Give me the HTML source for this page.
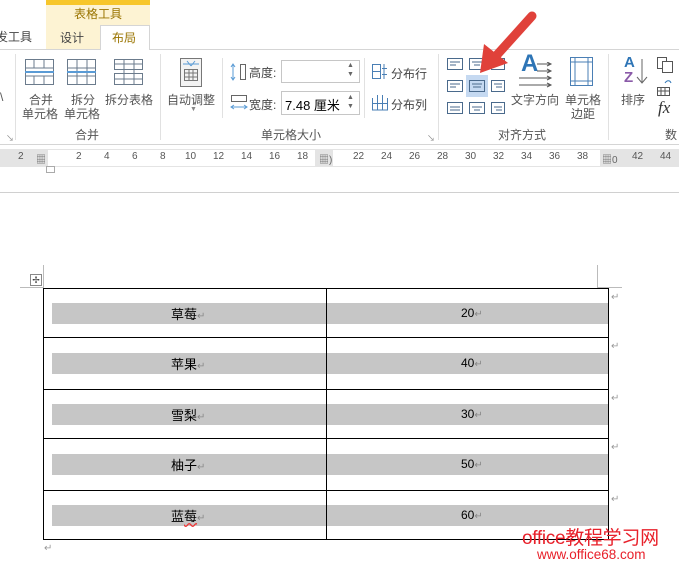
<!DOCTYPE html>
<html><head><meta charset="utf-8">
<style>
*{margin:0;padding:0;box-sizing:border-box}
body{width:679px;height:572px;overflow:hidden;background:#fff;font-family:"Liberation Sans","Noto Sans CJK SC",sans-serif;font-size:12px;color:#444;position:relative}
.a{position:absolute;white-space:nowrap}
.lbl{color:#555;font-size:12px}
.sep{position:absolute;width:1px;background:#e1e1e1}
.band{position:absolute;left:52px;width:556px;height:21px;background:#c6c6c6}
.hl{position:absolute;left:43px;width:566px;height:1px;background:#000}
.cell{position:absolute;font-size:13px;color:#000}
.ret{color:#888;font-size:10px}
.rt{position:absolute;color:#999;font-size:10px}
</style></head><body>
<div class="a" style="left:46px;top:0;width:104px;height:5px;background:#f7c62b"></div>
<div class="a" style="left:46px;top:5px;width:104px;height:44px;background:#fdf3d3"></div>
<div class="a" style="left:74px;top:5px;color:#9a7400;font-size:12px">表格工具</div>
<div class="a" style="left:-4px;top:28px;color:#444;font-size:12px">发工具</div>
<div class="a" style="left:60px;top:29px;color:#444;font-size:12px">设计</div>
<div class="a" style="left:100px;top:25px;width:50px;height:25px;background:#fff;border:1px solid #d5d5d5;border-bottom:none"></div>
<div class="a" style="left:112px;top:29px;color:#9a7400;font-size:12px">布局</div>
<div class="a" style="left:0;top:49px;width:100px;height:1px;background:#d5d5d5"></div>
<div class="a" style="left:150px;top:49px;width:529px;height:1px;background:#d5d5d5"></div>
<div class="sep" style="left:15px;top:54px;height:86px"></div>
<div class="sep" style="left:160px;top:54px;height:86px"></div>
<div class="sep" style="left:222px;top:58px;height:60px"></div>
<div class="sep" style="left:364px;top:58px;height:60px"></div>
<div class="sep" style="left:438px;top:54px;height:86px"></div>
<div class="sep" style="left:608px;top:54px;height:86px"></div>
<div class="a lbl" style="left:0;top:90px">\</div>
<svg class="a" style="left:24px;top:58px" width="120" height="28">
 <g fill="none" stroke="#6b7b8c" stroke-width="1">
  <rect x="1.5" y="1.5" width="28" height="25"/><line x1="1" y1="10" x2="30" y2="10"/><line x1="1" y1="18" x2="30" y2="18"/><line x1="10" y1="1" x2="10" y2="10"/><line x1="20" y1="1" x2="20" y2="10"/><line x1="10" y1="18" x2="20" y2="18"/><line x1="10" y1="18" x2="10" y2="27"/><line x1="20" y1="18" x2="20" y2="27"/>
  <rect x="43.5" y="1.5" width="28" height="25"/><line x1="43" y1="10" x2="72" y2="10"/><line x1="43" y1="18" x2="72" y2="18"/><line x1="53" y1="1" x2="53" y2="27"/><line x1="63" y1="1" x2="63" y2="27"/>
  <rect x="90.5" y="1.5" width="28" height="10"/><rect x="90.5" y="15.5" width="28" height="11"/><line x1="100" y1="1" x2="100" y2="27"/><line x1="110" y1="1" x2="110" y2="27"/><line x1="90" y1="6" x2="119" y2="6"/><line x1="90" y1="21" x2="119" y2="21"/>
 </g>
 <line x1="1" y1="14" x2="30" y2="14" stroke="#5a9bd5" stroke-width="2"/>
 <line x1="43" y1="14" x2="72" y2="14" stroke="#5a9bd5" stroke-width="2"/>
</svg>
<div class="a lbl" style="left:29px;top:91px">合并</div>
<div class="a lbl" style="left:22px;top:105px">单元格</div>
<div class="a lbl" style="left:71px;top:91px">拆分</div>
<div class="a lbl" style="left:64px;top:105px">单元格</div>
<div class="a lbl" style="left:105px;top:91px">拆分表格</div>
<div class="a lbl" style="left:75px;top:126px">合并</div>
<div class="a" style="left:6px;top:133px;font-size:8px;color:#888">↘</div>
<svg class="a" style="left:179px;top:58px" width="24" height="30">
 <rect x="1.5" y="0.5" width="21" height="28" fill="#f3f3f3" stroke="#777"/>
 <g stroke="#777" fill="none"><rect x="5.5" y="11.5" width="13" height="11"/><line x1="5" y1="15" x2="19" y2="15"/><line x1="5" y1="19" x2="19" y2="19"/><line x1="10" y1="11" x2="10" y2="23"/><line x1="14" y1="11" x2="14" y2="23"/></g>
 <path d="M4 6h16M8 3l4 5M16 3l-4 5" stroke="#5a9bd5" fill="none"/>
</svg>
<div class="a lbl" style="left:167px;top:91px">自动调整</div>
<div class="a" style="left:190px;top:106px;font-size:7px;color:#888">▼</div>
<svg class="a" style="left:229px;top:62px" width="20" height="20"><path d="M4 2v16M2 5l2-3 2 3M2 15l2 3 2-3" stroke="#5a9bd5" fill="none"/><rect x="11.5" y="2.5" width="5" height="15" fill="none" stroke="#666"/></svg>
<div class="a lbl" style="left:249px;top:64px;color:#444">高度:</div>
<div class="a" style="left:281px;top:60px;width:79px;height:23px;border:1px solid #c6c6c6"></div>
<div class="a" style="left:347px;top:61px;font-size:7px;color:#666;line-height:9px">▲<br>▼</div>
<svg class="a" style="left:229px;top:93px" width="20" height="20"><rect x="2.5" y="2.5" width="15" height="6" fill="none" stroke="#666"/><path d="M2 14h16M5 12l-3 2 3 2M15 12l3 2-3 2" stroke="#5a9bd5" fill="none"/></svg>
<div class="a lbl" style="left:249px;top:96px;color:#444">宽度:</div>
<div class="a" style="left:281px;top:91px;width:79px;height:24px;border:1px solid #c6c6c6"></div>
<div class="a" style="left:285px;top:95px;font-size:13px;color:#000">7.48 厘米</div>
<div class="a" style="left:347px;top:93px;font-size:7px;color:#666;line-height:9px">▲<br>▼</div>
<svg class="a" style="left:372px;top:64px" width="16" height="16"><g stroke="#4a7fb5" fill="none"><rect x="0.5" y="0.5" width="8" height="14"/><line x1="0" y1="7.5" x2="9" y2="7.5"/><line x1="12" y1="0" x2="12" y2="15"/><line x1="10" y1="4.5" x2="15" y2="4.5"/><line x1="10" y1="10.5" x2="15" y2="10.5"/></g></svg>
<div class="a lbl" style="left:391px;top:65px;color:#444">分布行</div>
<svg class="a" style="left:372px;top:95px" width="16" height="16"><g stroke="#4a7fb5" fill="none"><path d="M0.5 3v12h15V3M5.5 0v15M10.5 0v15M0 8.5h16"/></g></svg>
<div class="a lbl" style="left:391px;top:96px;color:#444">分布列</div>
<div class="a lbl" style="left:261px;top:126px">单元格大小</div>
<div class="a" style="left:427px;top:133px;font-size:8px;color:#888">↘</div>
<svg class="a" style="left:444px;top:55px" width="62" height="63">
 <rect x="22" y="20" width="22" height="22" fill="#c5d9f1"/>
 <g fill="none" stroke="#4a6a8c">
  <rect x="3.5" y="3.5" width="15" height="11"/><rect x="25.5" y="3.5" width="15" height="11"/><rect x="47.5" y="3.5" width="13" height="11"/>
  <rect x="3.5" y="25.5" width="15" height="11"/><rect x="25.5" y="25.5" width="15" height="11"/><rect x="47.5" y="25.5" width="13" height="11"/>
  <rect x="3.5" y="47.5" width="15" height="11"/><rect x="25.5" y="47.5" width="15" height="11"/><rect x="47.5" y="47.5" width="13" height="11"/>
  <path d="M6 7h10M6 10h6M28 7h10M30 10h6M6 29h10M6 32h6M28 29h10M29 32h8M50 29h8M52 32h6M6 52h10M6 55h10M28 52h10M30 55h6M50 52h8M52 55h6"/>
 </g>
</svg>
<div class="a" style="left:521px;top:52px;font-size:24px;color:#2e75b6;font-weight:bold;line-height:24px">A</div>
<svg class="a" style="left:517px;top:62px" width="38" height="30"><g stroke="#555" fill="none"><path d="M20 2h14M20 9h14M2 16h32M2 23h32M30 0l4 2-4 2M30 7l4 2-4 2M30 14l4 2-4 2M30 21l4 2-4 2"/></g></svg>
<div class="a lbl" style="left:511px;top:91px">文字方向</div>
<svg class="a" style="left:570px;top:57px" width="24" height="30"><g fill="none" stroke="#4a7fb5"><rect x="0.5" y="0.5" width="22" height="28"/><line x1="5" y1="0" x2="5" y2="29"/><line x1="18" y1="0" x2="18" y2="29"/><line x1="0" y1="5" x2="23" y2="5"/><line x1="0" y1="24" x2="23" y2="24"/></g></svg>
<div class="a lbl" style="left:565px;top:91px">单元格</div>
<div class="a lbl" style="left:571px;top:105px">边距</div>
<div class="a lbl" style="left:498px;top:126px">对齐方式</div>
<div class="a" style="left:624px;top:55px;font-size:15px;font-weight:bold;color:#2e75b6;line-height:15px">A</div>
<div class="a" style="left:624px;top:70px;font-size:15px;font-weight:bold;color:#8a5aa8;line-height:15px">Z</div>
<svg class="a" style="left:636px;top:58px" width="12" height="28"><path d="M6 1v24M1 19l5 6 5-6" stroke="#666" fill="none"/></svg>
<div class="a lbl" style="left:621px;top:91px">排序</div>
<svg class="a" style="left:657px;top:57px" width="22" height="60"><g fill="none" stroke="#555"><rect x="0.5" y="0.5" width="9" height="11"/><rect x="5.5" y="4.5" width="10" height="11" fill="#fff"/><rect x="0.5" y="30.5" width="12" height="8"/><path d="M0 34h12M4 30v9M8 30v9"/></g><path d="M8 26c2-3 5-3 6 0" stroke="#2e75b6" fill="none"/></svg>
<div class="a" style="left:658px;top:98px;font-size:17px;font-style:italic;font-family:'Liberation Serif',serif;color:#333">fx</div>
<div class="a lbl" style="left:665px;top:126px">数</div>
<svg class="a" style="left:470px;top:8px" width="80" height="72"><path d="M62 8L26 48" stroke="#e0413a" stroke-width="9" stroke-linecap="round"/><path d="M10 65L14 36L38 55Z" fill="#e0413a"/></svg>
<div class="a" style="left:0;top:144px;width:679px;height:1px;background:#d5d5d5"></div>
<div class="a" style="left:0;top:149px;width:679px;height:18px;background:#e4e4e4"></div>
<div class="a" style="left:48px;top:150px;width:267px;height:16px;background:#fff"></div>
<div class="a" style="left:333px;top:150px;width:267px;height:16px;background:#fff"></div>
<div class="a" style="left:0;top:151px;width:679px;font-size:10px;color:#555">
<span class="a" style="left:18px">2</span><span class="a" style="left:36px;color:#666">▦</span><span class="a" style="left:76px">2</span><span class="a" style="left:104px">4</span><span class="a" style="left:132px">6</span><span class="a" style="left:160px">8</span><span class="a" style="left:185px">10</span><span class="a" style="left:213px">12</span><span class="a" style="left:241px">14</span><span class="a" style="left:269px">16</span><span class="a" style="left:297px">18</span><span class="a" style="left:319px;color:#666">▦)</span><span class="a" style="left:353px">22</span><span class="a" style="left:381px">24</span><span class="a" style="left:409px">26</span><span class="a" style="left:437px">28</span><span class="a" style="left:465px">30</span><span class="a" style="left:493px">32</span><span class="a" style="left:521px">34</span><span class="a" style="left:549px">36</span><span class="a" style="left:577px">38</span><span class="a" style="left:602px;color:#666">▦0</span><span class="a" style="left:632px">42</span><span class="a" style="left:660px">44</span>
</div>
<div class="a" style="left:46px;top:166px;width:9px;height:7px;border:1px solid #aaa;background:#fff"></div>
<div class="a" style="left:0;top:192px;width:679px;height:1px;background:#d0d0d0"></div>
<div class="a" style="left:43px;top:265px;width:1px;height:23px;background:#bbb"></div>
<div class="a" style="left:20px;top:287px;width:23px;height:1px;background:#bbb"></div>
<div class="a" style="left:597px;top:265px;width:1px;height:23px;background:#bbb"></div>
<div class="a" style="left:597px;top:287px;width:25px;height:1px;background:#bbb"></div>
<div class="a" style="left:30px;top:274px;width:12px;height:12px;border:1px solid #888;background:#fff;font-size:9px;line-height:10px;text-align:center;color:#333">✢</div>
<div class="band" style="top:303px"></div>
<div class="band" style="top:353px"></div>
<div class="band" style="top:404px"></div>
<div class="band" style="top:454px"></div>
<div class="band" style="top:505px"></div>
<div class="hl" style="top:288px"></div>
<div class="hl" style="top:337px"></div>
<div class="hl" style="top:389px"></div>
<div class="hl" style="top:438px"></div>
<div class="hl" style="top:490px"></div>
<div class="hl" style="top:539px"></div>
<div class="a" style="left:43px;top:288px;width:1px;height:252px;background:#000"></div>
<div class="a" style="left:326px;top:288px;width:1px;height:252px;background:#000"></div>
<div class="a" style="left:608px;top:288px;width:1px;height:252px;background:#000"></div>
<div class="cell" style="left:171px;top:304px">草莓<span class="ret">↵</span></div>
<div class="cell" style="left:171px;top:354px">苹果<span class="ret">↵</span></div>
<div class="cell" style="left:171px;top:405px">雪梨<span class="ret">↵</span></div>
<div class="cell" style="left:171px;top:455px">柚子<span class="ret">↵</span></div>
<div class="cell" style="left:171px;top:506px">蓝<span style="text-decoration:underline wavy #e33">莓</span><span class="ret">↵</span></div>
<div class="cell" style="left:461px;top:306px;font-size:12px">20<span class="ret">↵</span></div>
<div class="cell" style="left:461px;top:356px;font-size:12px">40<span class="ret">↵</span></div>
<div class="cell" style="left:461px;top:407px;font-size:12px">30<span class="ret">↵</span></div>
<div class="cell" style="left:461px;top:457px;font-size:12px">50<span class="ret">↵</span></div>
<div class="cell" style="left:461px;top:508px;font-size:12px">60<span class="ret">↵</span></div>
<div class="rt" style="left:611px;top:292px">↵</div>
<div class="rt" style="left:611px;top:341px">↵</div>
<div class="rt" style="left:611px;top:393px">↵</div>
<div class="rt" style="left:611px;top:442px">↵</div>
<div class="rt" style="left:611px;top:494px">↵</div>
<div class="rt" style="left:44px;top:543px">↵</div>
<div class="a" style="left:522px;top:523px;font-size:19px;color:#e8202a;letter-spacing:-0.3px">office教程学习网</div>
<div class="a" style="left:537px;top:547px;font-size:13.5px;color:#e8202a">www.office68.com</div>
</body></html>
